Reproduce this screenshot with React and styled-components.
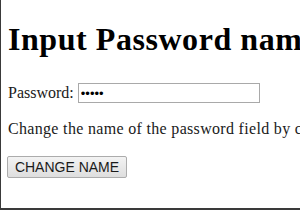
import styled, { createGlobalStyle } from "styled-components"

const Global = createGlobalStyle`
  html, body {
    margin: 0;
    padding: 0;
    background: #fff;
  }
  body {
    font-family: "Liberation Serif", "Times New Roman", serif;
    font-size: 16px;
    color: #1a1a1a;
  }
`

const Frame = styled.div`
  box-sizing: border-box;
  width: 300px;
  height: 210px;
  overflow: hidden;
  padding: 21px 0 0 7px;
  border-left: 1px solid #3a3a3a;
  border-bottom: 2px solid #3a3a3a;
  white-space: nowrap;
`

const Title = styled.h1`
  margin: 0 0 25px;
  font-size: 32px;
  font-weight: bold;
  color: #000;
  line-height: 37px;
  letter-spacing: 0.55px;
`

const Row = styled.div`
  display: flex;
  align-items: center;
  height: 20px;
  gap: 4px;
`

const Label = styled.label`
  line-height: 18px;
`

const Field = styled.input`
  box-sizing: border-box;
  width: 182px;
  height: 20px;
  margin: 0;
  padding: 0 2px;
  border: 1px solid #a9a9a9;
  font-family: "Liberation Sans", Arial, sans-serif;
  font-size: 13px;
  outline: none;
`

const Text = styled.p`
  margin: 17px 0 18px;
  line-height: 18px;
  letter-spacing: 0.32px;
`

const Button = styled.button`
  box-sizing: border-box;
  height: 22px;
  width: 120px;
  margin-left: -1px;
  padding: 0;
  border: 1px solid #acacac;
  border-radius: 2px;
  background: linear-gradient(#f3f3f3, #dedede);
  font-family: "Liberation Sans", Arial, sans-serif;
  font-size: 14px;
  color: #1a1a1a;
`

function App() {
  return (
    <Frame>
      <Global />
      <Title>Input Password name Property</Title>
      <Row>
        <Label htmlFor="pwd">Password:</Label>
        <Field id="pwd" type="password" defaultValue="abcde" name="password" />
      </Row>
      <Text>Change the name of the password field by clicking the button.</Text>
      <Button>CHANGE NAME</Button>
    </Frame>
  )
}

export default App;
